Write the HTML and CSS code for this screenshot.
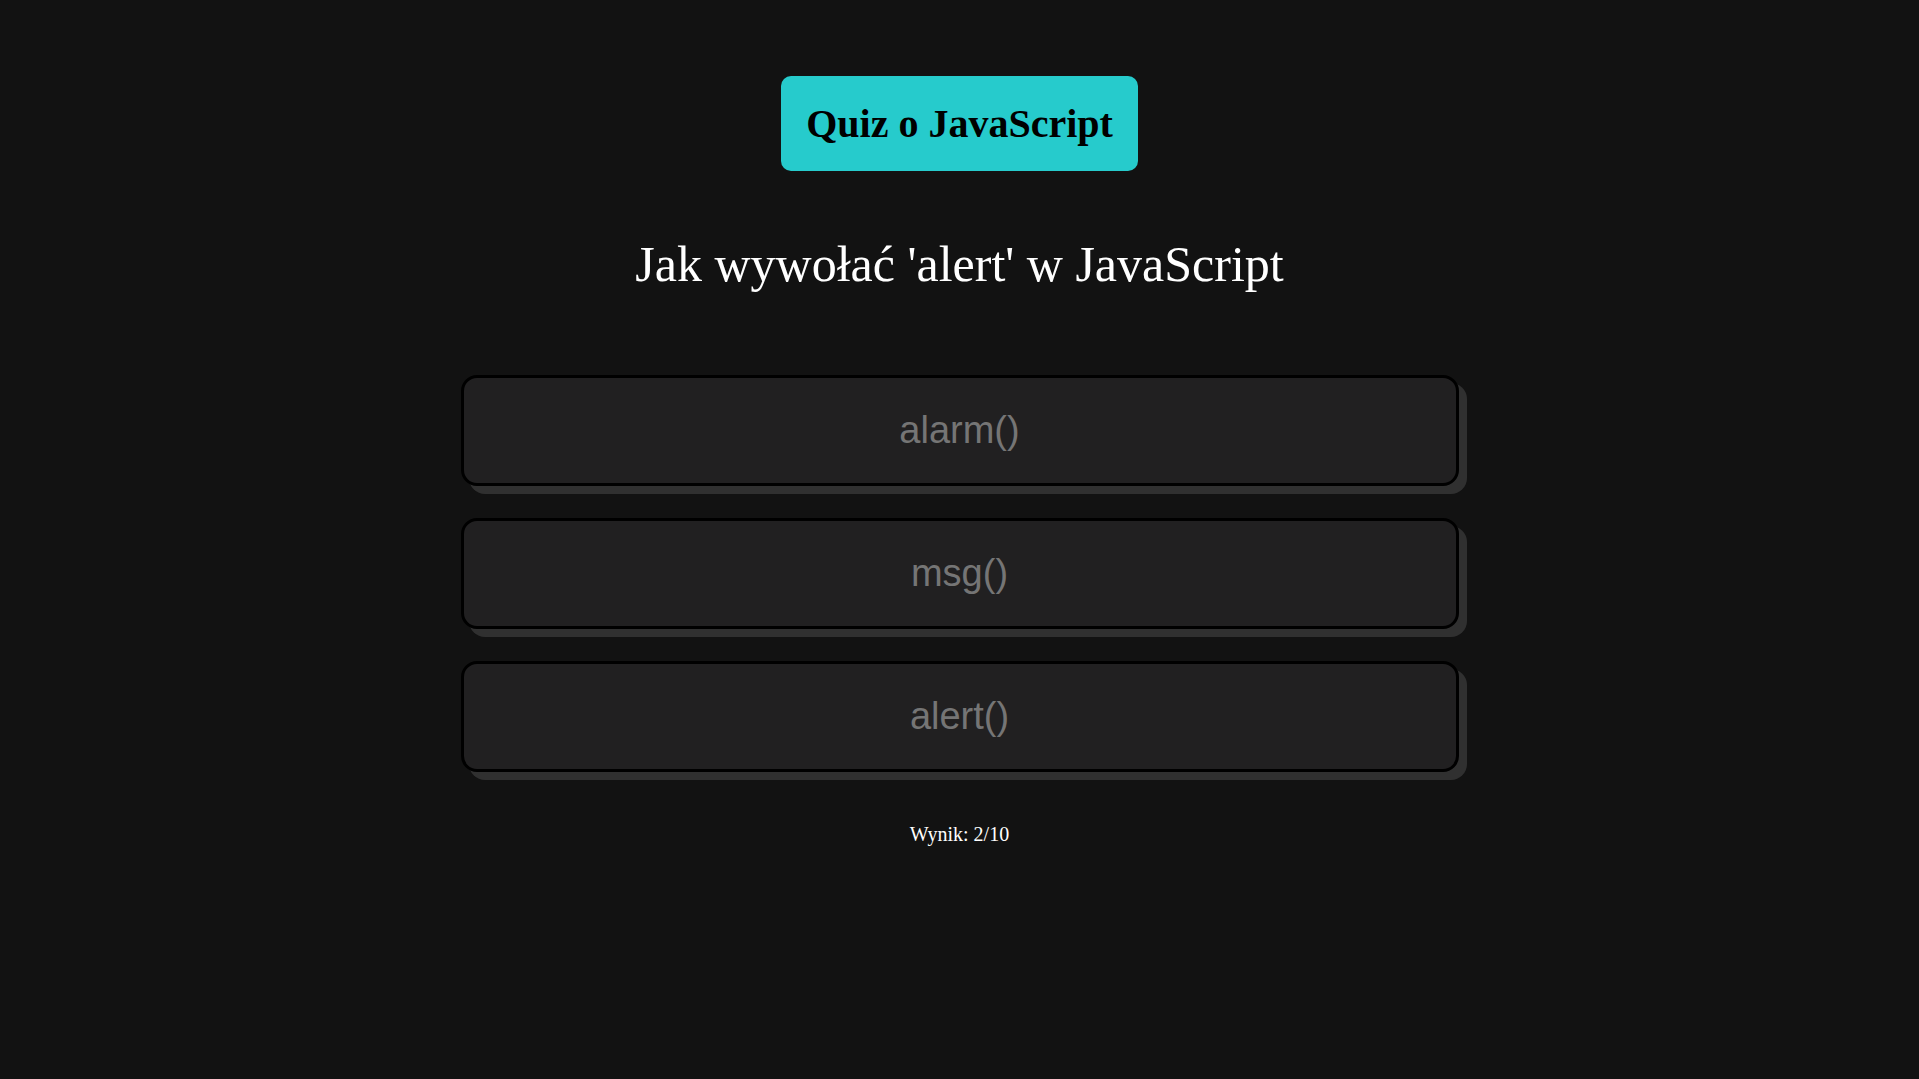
FILE: index.html
```html
<!DOCTYPE html>
<html lang="pl">
<head>
<meta charset="utf-8">
<title>Quiz o JavaScript</title>
<link rel="stylesheet" href="styles.css">
</head>
<body>
<main class="quiz">
  <h1 class="quiz-title">Quiz o JavaScript</h1>
  <h2 class="question">Jak wywołać 'alert' w JavaScript</h2>
  <div class="answers">
    <button class="answer">alarm()</button>
    <button class="answer">msg()</button>
    <button class="answer">alert()</button>
  </div>
  <p class="score">Wynik: 2/10</p>
</main>
</body>
</html>
```

FILE: styles.css
```css
html, body {
  margin: 0;
  padding: 0;
}

body {
  background: #121212;
  font-family: "Liberation Serif", "Times New Roman", serif;
  color: #ffffff;
  min-height: 1079px;
}

.quiz {
  display: flex;
  flex-direction: column;
  align-items: center;
  padding-top: 76px;
}

.quiz-title {
  margin: 0;
  background: #26cbcc;
  color: #000000;
  font-size: 40px;
  font-weight: bold;
  line-height: 47px;
  padding: 24px 25px;
  border-radius: 10px;
}

.question {
  margin: 66px 0 0;
  font-size: 50px;
  font-weight: normal;
  line-height: 55px;
  color: #ffffff;
}

.answers {
  display: flex;
  flex-direction: column;
  gap: 32px;
  margin-top: 83px;
}

.answer {
  width: 998px;
  height: 111px;
  box-sizing: border-box;
  background: #212021;
  border: 3px solid #000000;
  border-radius: 16px;
  box-shadow: 8px 8px 0 #303030;
  color: #757575;
  font-family: "Liberation Sans", Arial, sans-serif;
  font-size: 38px;
  padding: 0;
  cursor: pointer;
}

.score {
  margin: 51px 0 0;
  font-size: 20px;
  line-height: 23px;
  color: #ffffff;
}
```
